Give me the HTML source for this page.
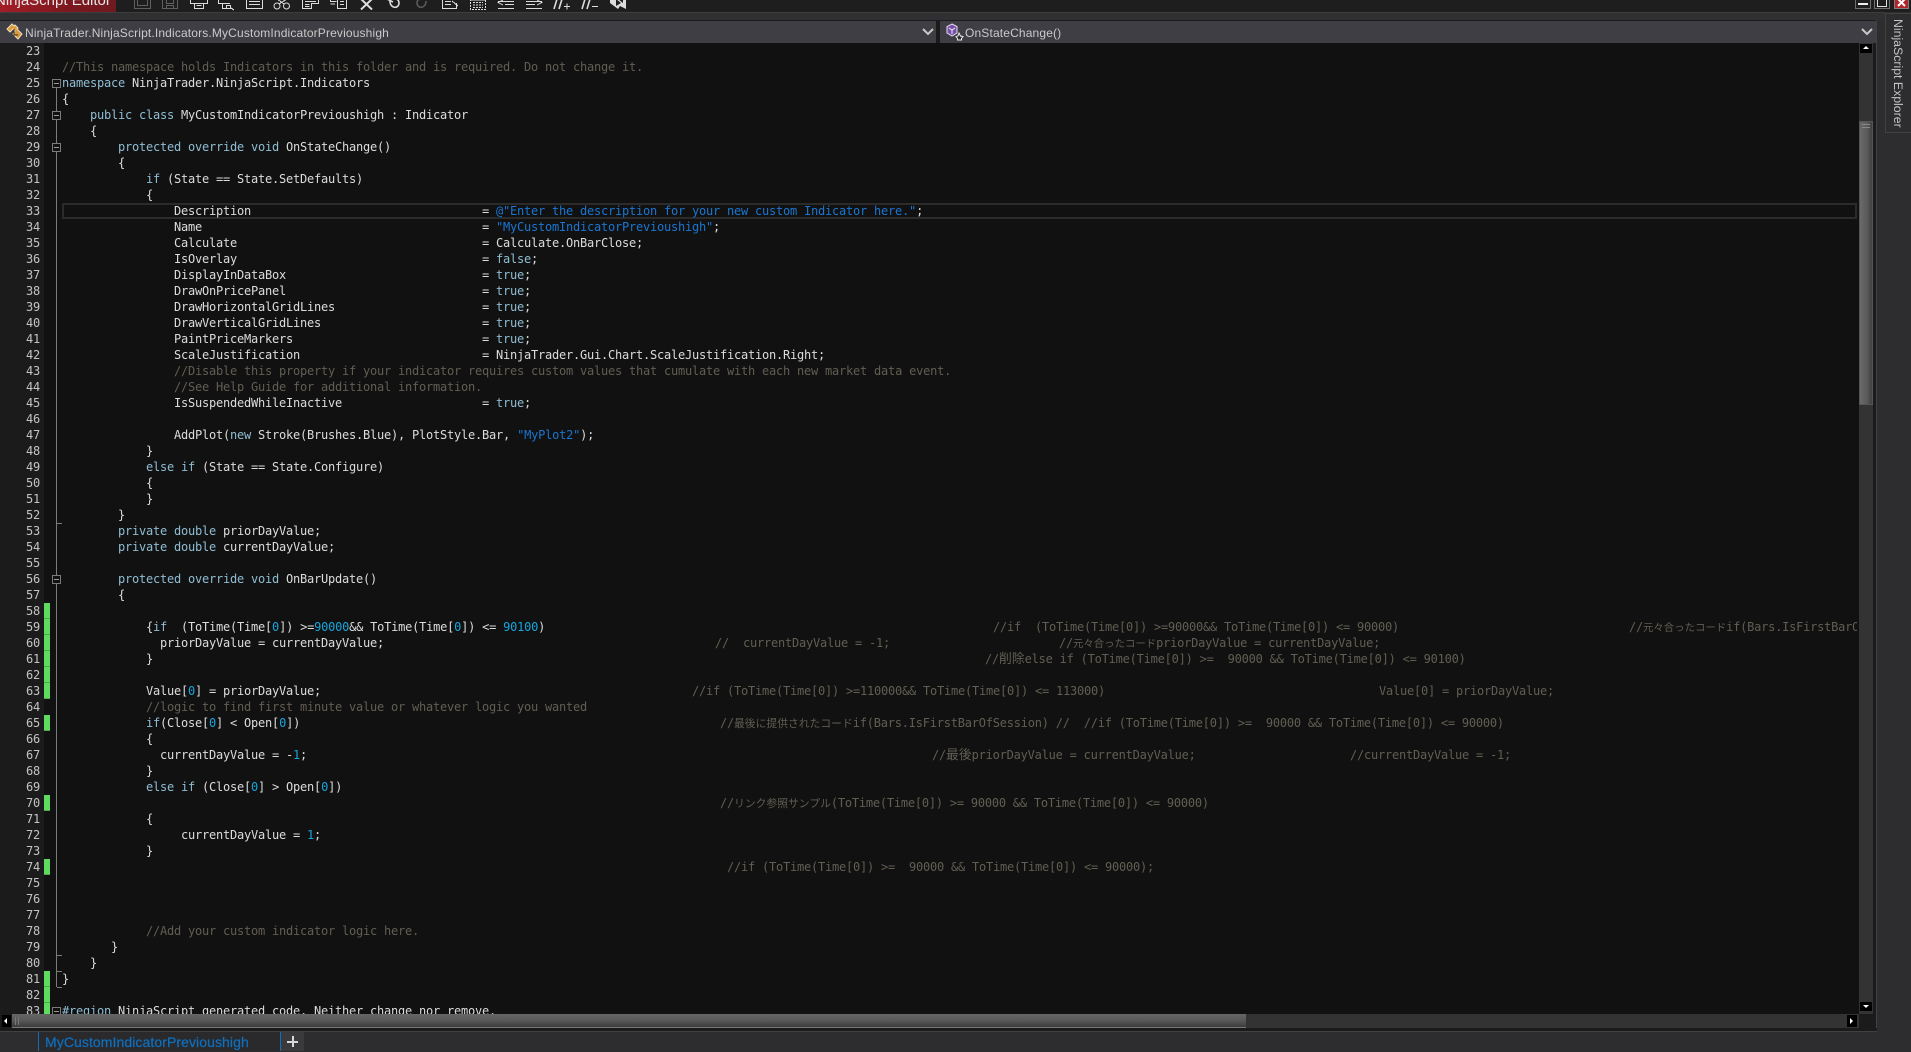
<!DOCTYPE html>
<html><head><meta charset="utf-8"><style>
html,body{margin:0;padding:0;width:1911px;height:1051px;overflow:hidden;background:#2d2d30}
div{box-sizing:border-box}
.a{position:absolute}
#ed{position:absolute;left:0;top:43px;width:1859px;height:971px;background:#111;overflow:hidden}
#gut{position:absolute;left:0;top:0;width:44px;height:971px;background:#1b1b1b}
#code{position:absolute;left:0;top:-43px;width:1857px;height:1057px;overflow:hidden;font:12px/16px "DejaVu Sans Mono","Noto Sans CJK JP",monospace;letter-spacing:-.224px;color:#dcdcdc;white-space:pre}
.l{position:absolute;white-space:pre;height:16px;line-height:16px}
.n{position:absolute;left:0;width:40px;text-align:right;color:#c4c4c4;height:16px;line-height:16px}
.k{color:#8fbdd3}.c{color:#625e53}.u{color:#16a5dc}.s{color:#1a76d2}
.j{font-family:"Noto Sans CJK JP",sans-serif;font-size:10.8px;letter-spacing:0;line-height:0}
.j2{font-size:10.4px}.j3{font-size:12.8px}
.g{position:absolute;left:44px;width:6px;height:16px;background:#5fdc5f;border-bottom:1px solid #4aa94a}
.fb{position:absolute;left:52px;width:9px;height:9px;border:1px solid #7b7b7b;background:#111}
.fb:after{content:"";position:absolute;left:1px;top:3px;width:5px;height:1px;background:#9a9a9a}
.t{position:absolute;left:57px;width:5px;height:1px;background:#7b7b7b}
.ui{font-family:"Liberation Sans",sans-serif}
</style></head><body>
<div class="a" style="left:0;top:0;width:1911px;height:12px;background:#1e1e1e"></div>
<div class="a" style="left:0;top:12px;width:1885px;height:8px;background:#303033;border-top:1px solid #3d3d3d"></div>
<div class="a" style="left:0;top:20px;width:1877px;height:1px;background:#1a1a1a"></div>
<div class="a ui" style="left:0;top:0;width:116px;height:12px;overflow:hidden;background:linear-gradient(90deg,#a31d27,#7c171f 60%,#6e1a1f)"><span class="a" style="left:-5px;top:-8px;font-size:15px;line-height:18px;color:#e6e6e6;white-space:nowrap">NinjaScript Editor</span></div>

<svg class="a" style="left:0;top:0" width="800" height="12" viewBox="0 0 800 12" fill="none" stroke="#dcdcdc" stroke-width="1" shape-rendering="crispEdges">
<g stroke="#5f5f5f"><path d="M134.5 -1V8.5H150.5V-1M137.5 -1V5.5H147.5V-1"/><path d="M162.5 -1V8.5H177.5V-1M166.5 -1V3.5H173.5V-1M166.5 8V5.5H173.5V8"/></g>
<path d="M190.5 -1V3.5H194.5V8.5H203.5V3.5H207.5V-1M190.5 3.5H194.5M196.5 5.5H201.5M194.5 3.5H203.5"/>
<path d="M218.5 -1V3.5H222.5V8.5H229M222.5 3.5H230M226.5 5.5H230.5V8.5H226.5ZM231 8L234 10"/>
<path d="M246.5 -1V8.5H262.5V-1M249 1.5H260M249 4.5H260"/>
<path d="M277 -1L284 4M287 -1L279 4"/><circle cx="277" cy="6" r="3" shape-rendering="auto"/><circle cx="286.5" cy="6" r="3" shape-rendering="auto"/>
<path d="M302.5 -1V8.5H311.5V3.5H318.5V-1M305 1.5H316M305 4.5H309.5M305 6.5H309.5"/>
<path d="M330.5 -1V1.5H336.5M337.5 -1V8.5H346.5V-1M340 1.5H344M340 4.5H344M330.5 4H335"/>
<path d="M361 -1L372 9.5M372 -1L361 9.5" stroke-width="2" shape-rendering="auto"/>
<path d="M390 1C390 9 399 9 399 3C399 0 397 -1 395 -1" stroke-width="1.6" shape-rendering="auto"/><path d="M387 -1L393 2" stroke-width="1.6" shape-rendering="auto"/>
<path d="M426 1C426 9 417 9 417 3C417 0 419 -1 421 -1" stroke="#585858" stroke-width="1.6" shape-rendering="auto"/>
<path d="M442.5 -1V8.5H456.5V3M445 1.5H451M445 4.5H451M452 1L458 6"/>
<path d="M470.5 -1V9.5H485.5V-1M473 2.5H483M473 5H483M473 7.5H483" stroke-dasharray="2 1"/><path d="M470.5 0H485.5"/>
<path d="M498 8.5H514M505 4.5H514M498 1.5H514M503 0L498 2.5L503 5" />
<path d="M526 8.5H542M526 4.5H535M526 1.5H542M537 0L542 2.5L537 5"/>
<path d="M557 -1L554 9M562 -1L559 9" stroke-width="1.6" shape-rendering="auto"/><path d="M564 6.5H570M567 3.5V9.5"/>
<path d="M585 -1L582 9M590 -1L587 9" stroke-width="1.6" shape-rendering="auto"/><path d="M592 6.5H598"/>
<path d="M610 -2V3L618 9L620 6L626 9V-2H623V3L618 -1L613 -2Z" fill="#dcdcdc" stroke="none" shape-rendering="auto"/><path d="M616 -1L621 3L616 6Z" fill="#1e1e1e" stroke="none" shape-rendering="auto"/>
</svg>

<div class="a" style="left:1855px;top:-1px;width:16px;height:10px;border:1px solid #6f6f6f"><div class="a" style="left:2px;top:3px;width:10px;height:2px;background:#eee"></div></div>
<div class="a" style="left:1874px;top:-1px;width:16px;height:10px;border:1px solid #6f6f6f"><div class="a" style="left:2px;top:-1px;width:10px;height:8px;border:1px solid #ddd"></div></div>
<div class="a" style="left:1894px;top:-1px;width:15px;height:10px;background:#b0242c;border:1px solid #7f7f7f;overflow:hidden"><svg width="13" height="8" style="display:block"><path d="M3 -1L10 6M10 -1L3 6" stroke="#fff" stroke-width="2"/></svg></div>

<div class="a" style="left:1885px;top:13px;width:26px;height:120px;background:#2d2d30;border:1px solid #414141;border-right:0;overflow:hidden"></div>
<div class="a ui" style="left:1890px;top:19px;font-size:12.3px;line-height:15px;color:#c6c6c6;writing-mode:vertical-rl;white-space:nowrap">NinjaScript Explorer</div>

<div class="a" style="left:0;top:21px;width:1877px;height:1010px;background:#1b1b1b"></div>
<div class="a" style="left:0;top:21px;width:936px;height:22px;background:#3e3e44"></div>
<div class="a" style="left:940px;top:21px;width:936px;height:22px;background:#3e3e44"></div>
<div class="a" style="left:1876px;top:20px;width:1px;height:1012px;background:#414141"></div>
<div class="a" style="left:0;top:1031px;width:1877px;height:1px;background:#414141"></div>

<svg class="a" style="left:5px;top:23px" width="18" height="18" viewBox="0 0 18 18"><path d="M7 1L2 6L5 9L8 6L10 8L8 11L13 16L17 11L12 6L13 5L10 2L9 3Z" fill="#d99a3c" stroke="#f0e0c0" stroke-width="1"/><path d="M9 6V12H13" stroke="#2b2b2b" fill="none"/></svg>
<div class="a ui" style="left:25px;top:25px;font-size:12px;line-height:17px;color:#cbcbcb;white-space:nowrap;letter-spacing:.15px">NinjaTrader.NinjaScript.Indicators.MyCustomIndicatorPrevioushigh</div>
<svg class="a" style="left:922px;top:28px" width="12" height="8"><path d="M1 1L6 6L11 1" fill="none" stroke="#c8c8c8" stroke-width="2"/></svg>
<svg class="a" style="left:945px;top:23px" width="20" height="18" viewBox="0 0 20 18"><path d="M7 1L12 3.5V10L7 13L2 10V3.5Z" fill="#7a4fa8" stroke="#e8e0f0"/><path d="M4 5L7 7L10 5M7 7V11" stroke="#eee" fill="none"/><path d="M14 10L15.500 13L18 13.500L16.500 15.500V17H12.500V15.500L11 13.500L13 13Z" fill="#2d2d30" stroke="#eee"/></svg>
<div class="a ui" style="left:965px;top:25px;font-size:12px;line-height:17px;color:#cbcbcb;white-space:nowrap;letter-spacing:.15px">OnStateChange()</div>
<svg class="a" style="left:1861px;top:28px" width="12" height="8"><path d="M1 1L6 6L11 1" fill="none" stroke="#c8c8c8" stroke-width="2"/></svg>

<div id="ed">
<div id="gut"></div>
<div id="code">
<div class="a" style="left:62px;top:203px;width:1795px;height:16px;border:2px solid #2b2b2b"></div>
<div class="g" style="top:603px"></div><div class="g" style="top:619px"></div><div class="g" style="top:635px"></div><div class="g" style="top:651px"></div><div class="g" style="top:667px"></div><div class="g" style="top:683px"></div>
<div class="g" style="top:715px"></div><div class="g" style="top:795px"></div><div class="g" style="top:859px"></div><div class="g" style="top:971px"></div><div class="g" style="top:987px"></div><div class="g" style="top:1003px"></div>
<div class="a" style="left:56px;top:80px;width:1px;height:907px;background:#7b7b7b"></div>
<div class="a" style="left:56px;top:1010px;width:1px;height:8px;background:#7b7b7b"></div>
<div class="t" style="top:523px"></div><div class="t" style="top:955px"></div><div class="t" style="top:971px"></div><div class="t" style="top:987px"></div>
<div class="fb" style="top:79px"></div><div class="fb" style="top:111px"></div><div class="fb" style="top:143px"></div><div class="fb" style="top:575px"></div><div class="fb" style="top:1007px"></div>

<div class="n" style="top:43px">23</div><div class="n" style="top:59px">24</div><div class="n" style="top:75px">25</div><div class="n" style="top:91px">26</div><div class="n" style="top:107px">27</div><div class="n" style="top:123px">28</div><div class="n" style="top:139px">29</div><div class="n" style="top:155px">30</div><div class="n" style="top:171px">31</div><div class="n" style="top:187px">32</div><div class="n" style="top:203px">33</div><div class="n" style="top:219px">34</div><div class="n" style="top:235px">35</div><div class="n" style="top:251px">36</div><div class="n" style="top:267px">37</div><div class="n" style="top:283px">38</div><div class="n" style="top:299px">39</div><div class="n" style="top:315px">40</div><div class="n" style="top:331px">41</div><div class="n" style="top:347px">42</div><div class="n" style="top:363px">43</div><div class="n" style="top:379px">44</div><div class="n" style="top:395px">45</div><div class="n" style="top:411px">46</div><div class="n" style="top:427px">47</div><div class="n" style="top:443px">48</div><div class="n" style="top:459px">49</div><div class="n" style="top:475px">50</div><div class="n" style="top:491px">51</div><div class="n" style="top:507px">52</div><div class="n" style="top:523px">53</div><div class="n" style="top:539px">54</div><div class="n" style="top:555px">55</div><div class="n" style="top:571px">56</div><div class="n" style="top:587px">57</div><div class="n" style="top:603px">58</div><div class="n" style="top:619px">59</div><div class="n" style="top:635px">60</div><div class="n" style="top:651px">61</div><div class="n" style="top:667px">62</div><div class="n" style="top:683px">63</div><div class="n" style="top:699px">64</div><div class="n" style="top:715px">65</div><div class="n" style="top:731px">66</div><div class="n" style="top:747px">67</div><div class="n" style="top:763px">68</div><div class="n" style="top:779px">69</div><div class="n" style="top:795px">70</div><div class="n" style="top:811px">71</div><div class="n" style="top:827px">72</div><div class="n" style="top:843px">73</div><div class="n" style="top:859px">74</div><div class="n" style="top:875px">75</div><div class="n" style="top:891px">76</div><div class="n" style="top:907px">77</div><div class="n" style="top:923px">78</div><div class="n" style="top:939px">79</div><div class="n" style="top:955px">80</div><div class="n" style="top:971px">81</div><div class="n" style="top:987px">82</div><div class="n" style="top:1003px">83</div>

<div class="l c" style="left:62px;top:59px">//This namespace holds Indicators in this folder and is required. Do not change it.</div>
<div class="l" style="left:62px;top:75px"><span class="k">namespace</span> NinjaTrader.NinjaScript.Indicators</div>
<div class="l" style="left:62px;top:91px">{</div>
<div class="l" style="left:90px;top:107px"><span class="k">public class</span> MyCustomIndicatorPrevioushigh : Indicator</div>
<div class="l" style="left:90px;top:123px">{</div>
<div class="l" style="left:118px;top:139px"><span class="k">protected override void</span> OnStateChange()</div>
<div class="l" style="left:118px;top:155px">{</div>
<div class="l" style="left:146px;top:171px"><span class="k">if</span> (State == State.SetDefaults)</div>
<div class="l" style="left:146px;top:187px">{</div>
<div class="l" style="left:174px;top:203px">Description</div><div class="l" style="left:482px;top:203px">= <span class="s">@"Enter the description for your new custom Indicator here."</span>;</div>
<div class="l" style="left:174px;top:219px">Name</div><div class="l" style="left:482px;top:219px">= <span class="s">"MyCustomIndicatorPrevioushigh"</span>;</div>
<div class="l" style="left:174px;top:235px">Calculate</div><div class="l" style="left:482px;top:235px">= Calculate.OnBarClose;</div>
<div class="l" style="left:174px;top:251px">IsOverlay</div><div class="l" style="left:482px;top:251px">= <span class="k">false</span>;</div>
<div class="l" style="left:174px;top:267px">DisplayInDataBox</div><div class="l" style="left:482px;top:267px">= <span class="k">true</span>;</div>
<div class="l" style="left:174px;top:283px">DrawOnPricePanel</div><div class="l" style="left:482px;top:283px">= <span class="k">true</span>;</div>
<div class="l" style="left:174px;top:299px">DrawHorizontalGridLines</div><div class="l" style="left:482px;top:299px">= <span class="k">true</span>;</div>
<div class="l" style="left:174px;top:315px">DrawVerticalGridLines</div><div class="l" style="left:482px;top:315px">= <span class="k">true</span>;</div>
<div class="l" style="left:174px;top:331px">PaintPriceMarkers</div><div class="l" style="left:482px;top:331px">= <span class="k">true</span>;</div>
<div class="l" style="left:174px;top:347px">ScaleJustification</div><div class="l" style="left:482px;top:347px">= NinjaTrader.Gui.Chart.ScaleJustification.Right;</div>
<div class="l c" style="left:174px;top:363px">//Disable this property if your indicator requires custom values that cumulate with each new market data event.</div>
<div class="l c" style="left:174px;top:379px">//See Help Guide for additional information.</div>
<div class="l" style="left:174px;top:395px">IsSuspendedWhileInactive</div><div class="l" style="left:482px;top:395px">= <span class="k">true</span>;</div>
<div class="l" style="left:174px;top:427px">AddPlot(<span class="k">new</span> Stroke(Brushes.Blue), PlotStyle.Bar, <span class="s">"MyPlot2"</span>);</div>
<div class="l" style="left:146px;top:443px">}</div>
<div class="l" style="left:146px;top:459px"><span class="k">else if</span> (State == State.Configure)</div>
<div class="l" style="left:146px;top:475px">{</div>
<div class="l" style="left:146px;top:491px">}</div>
<div class="l" style="left:118px;top:507px">}</div>
<div class="l" style="left:118px;top:523px"><span class="k">private double</span> priorDayValue;</div>
<div class="l" style="left:118px;top:539px"><span class="k">private double</span> currentDayValue;</div>
<div class="l" style="left:118px;top:571px"><span class="k">protected override void</span> OnBarUpdate()</div>
<div class="l" style="left:118px;top:587px">{</div>
<div class="l" style="left:146px;top:619px">{<span class="k">if</span>  (ToTime(Time[<span class="u">0</span>]) &gt;=<span class="u">90000</span>&amp;&amp; ToTime(Time[<span class="u">0</span>]) &lt;= <span class="u">90100</span>)</div>
<div class="l c" style="left:993px;top:619px">//if  (ToTime(Time[0]) &gt;=90000&amp;&amp; ToTime(Time[0]) &lt;= 90000)</div>
<div class="l c" style="left:1629px;top:619px">//<span class="j j2">元々合ったコード</span>if(Bars.IsFirstBarOfSession)</div>
<div class="l" style="left:160px;top:635px">priorDayValue = currentDayValue;</div>
<div class="l c" style="left:715px;top:635px">//  currentDayValue = -1;</div>
<div class="l c" style="left:1059px;top:635px">//<span class="j j2">元々合ったコード</span>priorDayValue = currentDayValue;</div>
<div class="l" style="left:146px;top:651px">}</div>
<div class="l c" style="left:985px;top:651px">//<span class="j j3">削除</span>else if (ToTime(Time[0]) &gt;=  90000 &amp;&amp; ToTime(Time[0]) &lt;= 90100)</div>
<div class="l" style="left:146px;top:683px">Value[<span class="u">0</span>] = priorDayValue;</div>
<div class="l c" style="left:692px;top:683px">//if (ToTime(Time[0]) &gt;=110000&amp;&amp; ToTime(Time[0]) &lt;= 113000)</div>
<div class="l c" style="left:1379px;top:683px">Value[0] = priorDayValue;</div>
<div class="l c" style="left:146px;top:699px">//logic to find first minute value or whatever logic you wanted</div>
<div class="l" style="left:146px;top:715px"><span class="k">if</span>(Close[<span class="u">0</span>] &lt; Open[<span class="u">0</span>])</div>
<div class="l c" style="left:720px;top:715px">//<span class="j">最後に提供されたコード</span>if(Bars.IsFirstBarOfSession) //  //if (ToTime(Time[0]) &gt;=  90000 &amp;&amp; ToTime(Time[0]) &lt;= 90000)</div>
<div class="l" style="left:146px;top:731px">{</div>
<div class="l" style="left:160px;top:747px">currentDayValue = -<span class="u">1</span>;</div>
<div class="l c" style="left:932px;top:747px">//<span class="j j3">最後</span>priorDayValue = currentDayValue;</div>
<div class="l c" style="left:1350px;top:747px">//currentDayValue = -1;</div>
<div class="l" style="left:146px;top:763px">}</div>
<div class="l" style="left:146px;top:779px"><span class="k">else if</span> (Close[<span class="u">0</span>] &gt; Open[<span class="u">0</span>])</div>
<div class="l c" style="left:720px;top:795px">//<span class="j">リンク参照サンプル</span>(ToTime(Time[0]) &gt;= 90000 &amp;&amp; ToTime(Time[0]) &lt;= 90000)</div>
<div class="l" style="left:146px;top:811px">{</div>
<div class="l" style="left:181px;top:827px">currentDayValue = <span class="u">1</span>;</div>
<div class="l" style="left:146px;top:843px">}</div>
<div class="l c" style="left:727px;top:859px">//if (ToTime(Time[0]) &gt;=  90000 &amp;&amp; ToTime(Time[0]) &lt;= 90000);</div>
<div class="l c" style="left:146px;top:923px">//Add your custom indicator logic here.</div>
<div class="l" style="left:111px;top:939px">}</div>
<div class="l" style="left:90px;top:955px">}</div>
<div class="l" style="left:62px;top:971px">}</div>
<div class="l" style="left:62px;top:1003px"><span class="k">#region</span> NinjaScript generated code. Neither change nor remove.</div>
</div>
</div>

<!-- vertical scrollbar -->
<div class="a" style="left:1859px;top:43px;width:14px;height:971px;background:#333"></div>
<div class="a" style="left:1860px;top:44px;width:12px;height:9px;background:#000"><div class="a" style="left:3px;top:2px;width:0;height:0;border:3px solid transparent;border-top:0;border-bottom:3px solid #fff"></div></div>
<div class="a" style="left:1859px;top:121px;width:14px;height:284px;background:linear-gradient(90deg,#6a6a6a,#5c5c5c 55%,#3f3f3f);border:1px solid #555"><div class="a" style="left:2px;top:2px;width:8px;height:1px;background:#888"></div><div class="a" style="left:2px;top:5px;width:8px;height:1px;background:#888"></div></div>
<div class="a" style="left:1860px;top:1002px;width:12px;height:9px;background:#000"><div class="a" style="left:3px;top:3px;width:0;height:0;border:3px solid transparent;border-bottom:0;border-top:3px solid #fff"></div></div>
<!-- horizontal scrollbar -->
<div class="a" style="left:0;top:1014px;width:1859px;height:14px;background:#333"></div>
<div class="a" style="left:0;top:1014px;width:12px;height:14px;background:#1b1b1b"></div>
<div class="a" style="left:2px;top:1015px;width:9px;height:12px;background:#000"><div class="a" style="left:2px;top:3px;width:0;height:0;border:3px solid transparent;border-left:0;border-right:3px solid #fff"></div></div>
<div class="a" style="left:12px;top:1014px;width:1234px;height:14px;background:linear-gradient(180deg,#666,#585858 50%,#3c3c3c);border-bottom:1px solid #777"><div class="a" style="left:3px;top:3px;width:1px;height:8px;background:#777"></div><div class="a" style="left:6px;top:3px;width:1px;height:8px;background:#777"></div></div>
<div class="a" style="left:1847px;top:1015px;width:10px;height:12px;background:#000"><div class="a" style="left:3px;top:3px;width:0;height:0;border:3px solid transparent;border-right:0;border-left:3px solid #fff"></div></div>
<div class="a" style="left:0;top:1028px;width:1877px;height:3px;background:#1b1b1b"></div>
<div class="a" style="left:1859px;top:1014px;width:17px;height:17px;background:#1b1b1b"></div>

<!-- bottom tabs -->
<div class="a" style="left:0;top:1032px;width:1911px;height:19px;background:#2d2d30"></div>
<div class="a" style="left:38px;top:1032px;width:242px;height:19px;background:#2a2a2d;border-left:1px solid #0e70c0"></div>
<div class="a ui" style="left:45px;top:1032px;font-size:14px;line-height:20px;color:#0e70c0;white-space:nowrap;letter-spacing:.08px;-webkit-text-stroke:.2px #0e70c0">MyCustomIndicatorPrevioushigh</div>
<div class="a" style="left:280px;top:1032px;width:24px;height:19px;background:#3a3a3c;border-left:1px solid #0e70c0"></div>
<div class="a" style="left:287px;top:1041px;width:11px;height:2px;background:#d8d8d8"></div>
<div class="a" style="left:292px;top:1036px;width:2px;height:11px;background:#d8d8d8"></div>
</body></html>
